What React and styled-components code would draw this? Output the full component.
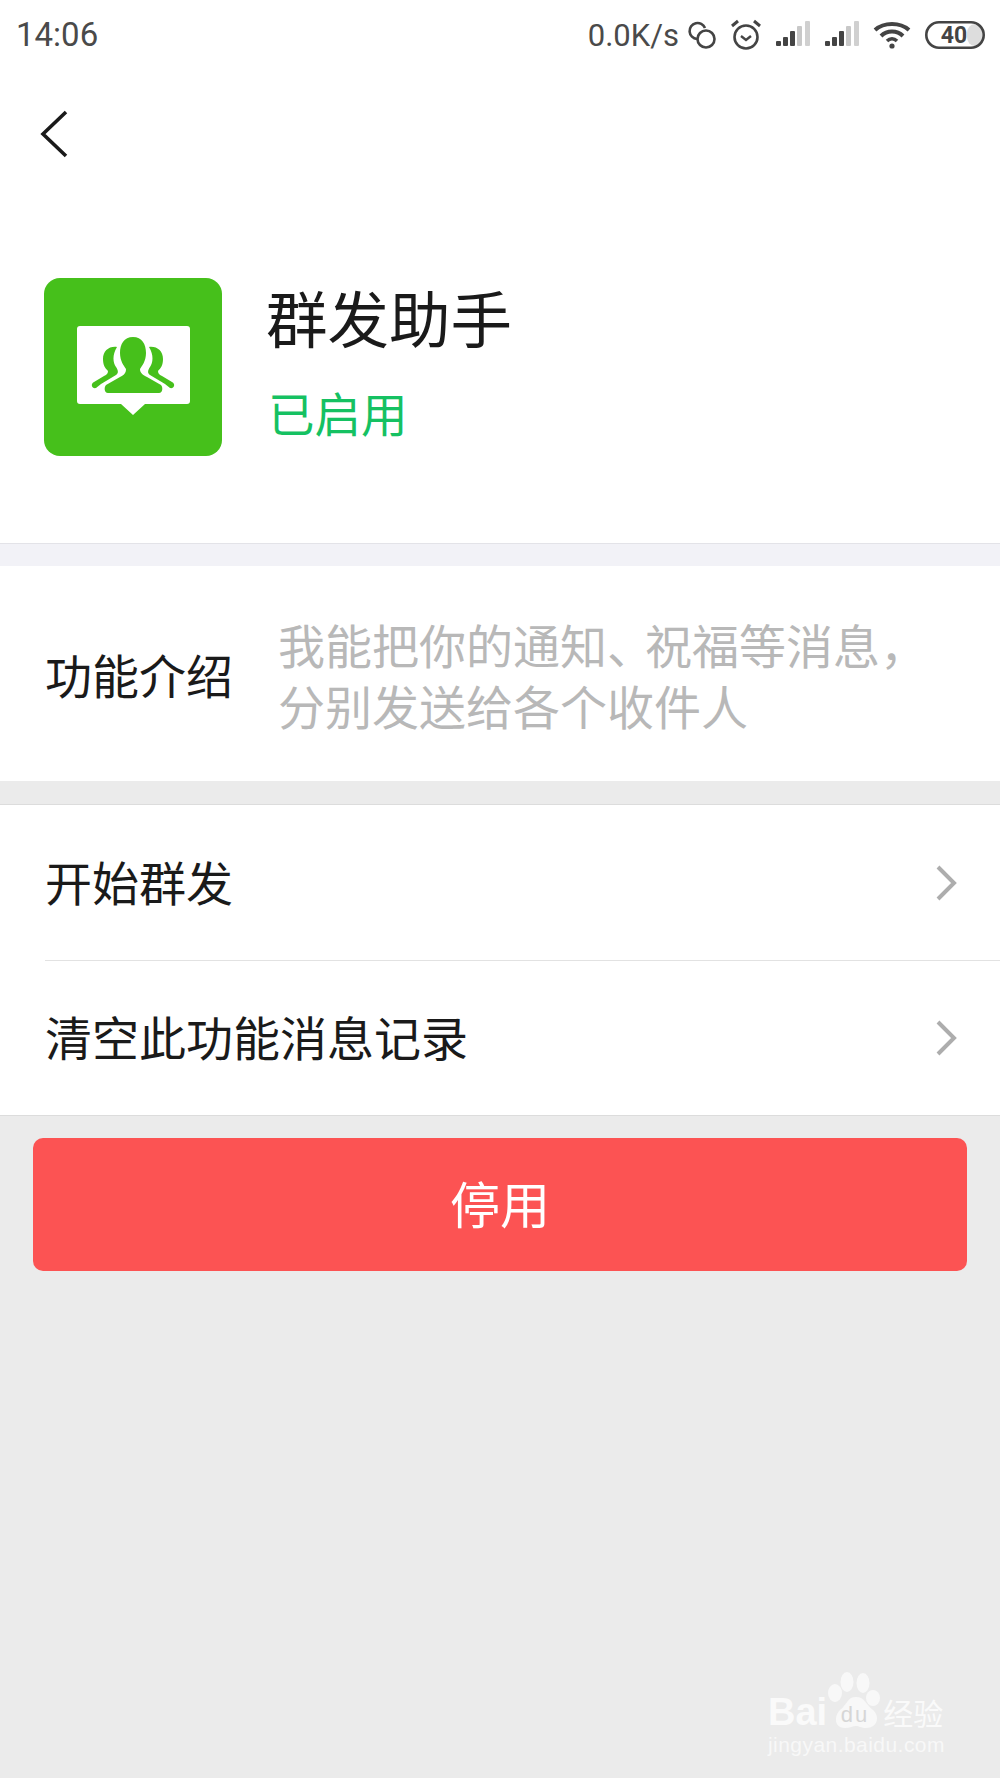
import React from "react";
import styled, { createGlobalStyle } from "styled-components";

const GlobalStyle = createGlobalStyle`
  html, body {
    margin: 0;
    padding: 0;
    background: #ebebeb;
  }
  * {
    box-sizing: border-box;
  }
`;

const Page = styled.div`
  position: relative;
  width: 1000px;
  height: 1778px;
  overflow: hidden;
  background: #ebebeb;
  font-family: "Noto Sans CJK SC", "Liberation Sans", sans-serif;
  color: #1a1a1a;
`;

const StatusBar = styled.div`
  display: flex;
  align-items: center;
  justify-content: space-between;
  height: 70px;
  padding: 0 15px 0 16px;
  background: #fff;
  color: #4a4a4a;
  font-family: Roboto, "Liberation Sans", sans-serif;
`;

const Time = styled.div`
  font-size: 33px;
  line-height: 68px;
`;

const StatusIcons = styled.div`
  display: flex;
  align-items: center;
`;

const Speed = styled.span`
  font-size: 31px;
  margin-right: 8px;
`;

const StatusSvg = styled.svg`
  display: block;
  margin-left: ${props => props.$gap || 0}px;
`;

const NavBar = styled.div`
  height: 108px;
  padding: 39px 0 0 38px;
  background: #fff;
`;

const AppHeader = styled.div`
  display: flex;
  align-items: center;
  height: 366px;
  padding: 12px 0 0 44px;
  background: #fff;
  border-bottom: 1px solid #e3e3e8;
`;

const AppIcon = styled.svg`
  display: block;
  flex: none;
`;

const AppInfo = styled.div`
  margin: 0 0 16px 46px;
`;

const AppName = styled.div`
  font-size: 61.5px;
  line-height: 84px;
  margin-left: -2px;
`;

const AppState = styled.div`
  font-size: 46.5px;
  line-height: 60px;
  margin-top: 23px;
  color: #15c162;
`;

const Band = styled.div`
  height: ${props => props.$h}px;
  background: ${props => props.$bg};
`;

const IntroRow = styled.div`
  display: flex;
  align-items: center;
  height: 215px;
  padding-left: 45px;
  background: #fff;
`;

const Label = styled.div`
  font-size: 47px;
  white-space: nowrap;
`;

const IntroText = styled.div`
  margin-left: 45px;
  font-size: 47px;
  line-height: 61px;
  color: #b8b8b8;
  white-space: nowrap;
`;

const Pause = styled.span`
  letter-spacing: -9px;
`;

const List = styled.div`
  background: #fff;
  border-top: 1px solid #dcdcdc;
  border-bottom: 1px solid #dcdcdc;
`;

const Row = styled.div`
  display: flex;
  align-items: center;
  justify-content: space-between;
  height: 155px;
  margin-left: 45px;
  padding-right: 43px;
  border-top: ${props => (props.$first ? "none" : "1px solid #e2e2e2")};
`;

const RowLabel = styled(Label)`
  margin-bottom: 5px;
`;

const StopButton = styled.div`
  display: flex;
  align-items: center;
  justify-content: center;
  width: 934px;
  height: 133px;
  margin: 22px 0 0 33px;
  padding-bottom: 5px;
  background: #fc5353;
  border-radius: 10px;
  color: #fff;
  font-size: 50px;
`;

const Watermark = styled.div`
  position: absolute;
  left: 768px;
  top: 1672px;
  width: 180px;
  color: #fafafa;
`;

const MarkLine = styled.div`
  display: flex;
  align-items: flex-end;
  height: 60px;
`;

const MarkLatin = styled.span`
  font-family: "Liberation Sans", sans-serif;
  font-weight: 700;
  font-size: 38px;
  line-height: 40px;
`;

const MarkCn = styled.span`
  margin: 0 0 5px 3px;
  font-size: 30px;
  line-height: 30px;
  white-space: nowrap;
`;

const PawSvg = styled.svg`
  display: block;
  flex: none;
  margin: 0 0 4px 1px;
`;

const MarkUrl = styled.div`
  margin-top: 1px;
  font-family: "Liberation Sans", sans-serif;
  font-size: 21px;
  line-height: 24px;
  letter-spacing: 0.45px;
  white-space: nowrap;
  color: #f8f8f8;
`;

const Bars = ({ gap }) => (
  <StatusSvg $gap={gap} width="36" height="30" viewBox="0 0 36 30">
    <rect x="1" y="21" width="5" height="5" rx="1" fill="#444" />
    <rect x="8" y="17" width="5" height="9" rx="1" fill="#444" />
    <rect x="15" y="11" width="5" height="15" rx="1" fill="#444" />
    <rect x="22" y="6" width="5" height="20" rx="1" fill="#c8c8c8" />
    <rect x="30" y="1" width="5" height="25" rx="1" fill="#d0d0d0" />
  </StatusSvg>
);

const Chevron = () => (
  <svg width="22" height="38" viewBox="0 0 22 38">
    <path d="M3 3L19 19L3 35" fill="none" stroke="#adadad" strokeWidth="4" />
  </svg>
);

export default function App() {
  return (
    <Page>
      <GlobalStyle />
      <StatusBar>
        <Time>14:06</Time>
        <StatusIcons>
          <Speed>0.0K/s</Speed>
          <StatusSvg width="30" height="30" viewBox="0 0 30 30">
            <path d="M10 19A8 8 0 1 1 18 8" fill="none" stroke="#444" strokeWidth="2.6" />
            <circle cx="19" cy="19" r="8.5" fill="none" stroke="#444" strokeWidth="2.6" />
          </StatusSvg>
          <StatusSvg $gap={13} width="32" height="32" viewBox="0 0 32 32">
            <circle cx="16" cy="18" r="11.5" fill="none" stroke="#444" strokeWidth="2.6" />
            <path d="M11 17L16 21L21 17" fill="none" stroke="#444" strokeWidth="2.4" />
            <path d="M2 7L8 2M30 7L24 2" fill="none" stroke="#444" strokeWidth="3" />
          </StatusSvg>
          <Bars gap={13} />
          <Bars gap={13} />
          <StatusSvg $gap={13} width="38" height="30" viewBox="0 0 38 30">
            <path d="M2 10C11 2 27 2 36 10" fill="none" stroke="#444" strokeWidth="4" />
            <path d="M8 16C14 10 24 10 30 16" fill="none" stroke="#444" strokeWidth="4" />
            <path d="M14 21C17 18 21 18 24 21" fill="none" stroke="#444" strokeWidth="3.5" />
            <circle cx="19" cy="26" r="2.6" fill="#444" />
          </StatusSvg>
          <StatusSvg $gap={14} width="60" height="28" viewBox="0 0 60 28">
            <rect x="42" y="3" width="15" height="22" rx="9" fill="#ddd" />
            <rect x="1.3" y="1.3" width="57.4" height="25.4" rx="12.7" fill="none" stroke="#444" strokeWidth="2.6" />
            <text
              x="29"
              y="22"
              textAnchor="middle"
              fontFamily="Roboto, sans-serif"
              fontWeight="700"
              fontSize="23"
              fill="#444"
            >
              40
            </text>
          </StatusSvg>
        </StatusIcons>
      </StatusBar>

      <NavBar>
        <svg width="32" height="50" viewBox="0 0 32 50">
          <path d="M28 3L5 25L28 47" fill="none" stroke="#1a1a1a" strokeWidth="3.6" />
        </svg>
      </NavBar>

      <AppHeader>
        <AppIcon width="178" height="178" viewBox="0 0 178 178">
          <rect width="178" height="178" rx="16" fill="#46c01b" />
          <path
            d="M36 48H143Q146 48 146 51V123Q146 126 143 126H101L89 137L77 126H36Q33 126 33 123V51Q33 48 36 48Z"
            fill="#fff"
          />
          <path
            d="M89 59C80 59 76 66 76 75C76 83 80 88 82 91C82 95 80 97 76 99L62 107C60 109 60 115 64 115H115C119 115 119 109 117 107L103 99C99 97 96 95 96 91C98 88 102 83 102 75C102 66 98 59 89 59Z"
            fill="#46c01b"
          />
          <path
            d="M73 69C65 68 59 73 59 81C59 87 61 90 64 93C64 96 62 97 60 98L50 104C46 106 48 111 52 110L57 106L72 97C75 95 74 92 72 89C69 85 68 77 73 69Z"
            fill="#46c01b"
          />
          <path
            d="M105 69C113 68 119 73 119 81C119 87 117 90 114 93C114 96 116 97 118 98L128 104C132 106 130 111 126 110L121 106L106 97C103 95 104 92 106 89C109 85 110 77 105 69Z"
            fill="#46c01b"
          />
        </AppIcon>
        <AppInfo>
          <AppName>群发助手</AppName>
          <AppState>已启用</AppState>
        </AppInfo>
      </AppHeader>

      <Band $h={22} $bg="#f2f2f7" />

      <IntroRow>
        <Label>功能介绍</Label>
        <IntroText>
          我能把你的通知<Pause>、</Pause>祝福等消息，
          <br />
          分别发送给各个收件人
        </IntroText>
      </IntroRow>

      <Band $h={23} $bg="#ebebeb" />

      <List>
        <Row $first>
          <RowLabel>开始群发</RowLabel>
          <Chevron />
        </Row>
        <Row>
          <RowLabel>清空此功能消息记录</RowLabel>
          <Chevron />
        </Row>
      </List>

      <StopButton>停用</StopButton>

      <Watermark>
        <MarkLine>
          <MarkLatin>Bai</MarkLatin>
          <PawSvg width="52" height="56" viewBox="0 0 52 56">
            <ellipse cx="7" cy="21" rx="7" ry="9" fill="#f8f8f8" />
            <ellipse cx="19" cy="10" rx="6.5" ry="10" fill="#f8f8f8" />
            <ellipse cx="35" cy="11" rx="6.5" ry="10" fill="#f8f8f8" />
            <ellipse cx="45" cy="26" rx="7" ry="8" fill="#f8f8f8" />
            <path
              d="M28 25C37 25 38 33 45 38C52 44 50 56 38 56C33 56 31 54 28 54C25 54 22 56 17 56C6 56 6 44 12 38C19 33 19 25 28 25Z"
              fill="#f8f8f8"
            />
            <text
              x="27"
              y="50"
              textAnchor="middle"
              fontFamily="Liberation Sans, sans-serif"
              fontSize="22"
              letterSpacing="2"
              fill="#d6d6d6"
            >
              du
            </text>
          </PawSvg>
          <MarkCn>经验</MarkCn>
        </MarkLine>
        <MarkUrl>jingyan.baidu.com</MarkUrl>
      </Watermark>
    </Page>
  );
}
